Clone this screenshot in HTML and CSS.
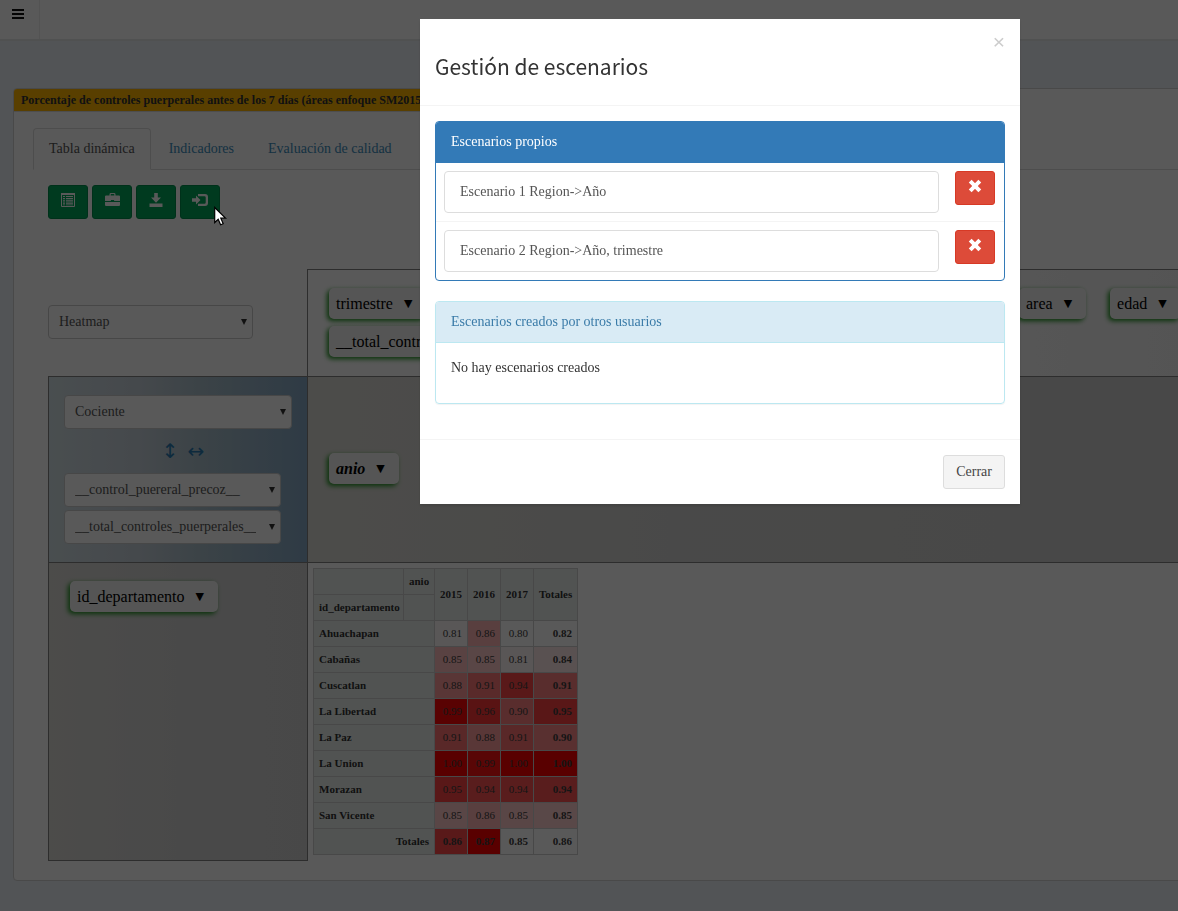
FILE: index.html
```html
<!DOCTYPE html>
<html lang="es">
<head>
<meta charset="utf-8">
<title>Tabla dinámica</title>
<link rel="stylesheet" href="styles.css">
</head>
<body>
<header class="topbar">
  <button class="menu-toggle" type="button" aria-label="Menú">
    <svg width="12" height="10" viewBox="0 0 12 10" fill="currentColor"><path d="M0 0h12v2H0zM0 4h12v2H0zM0 8h12v2H0z"/></svg>
  </button>
</header>

<main class="content">
  <section class="box">
    <h1 class="box-title">Porcentaje de controles puerperales antes de los 7 días (áreas enfoque SM2015)</h1>
    <div class="box-body">
      <nav class="tabs">
        <a class="tab tab-active" href="#tabla">Tabla dinámica</a>
        <a class="tab" href="#indicadores">Indicadores</a>
        <a class="tab" href="#calidad">Evaluación de calidad</a>
      </nav>

      <div class="pane" id="tabla">
        <div class="toolbar">
          <button class="btn btn-success" type="button" aria-label="Ver tabla">
            <svg width="14" height="14" viewBox="0 0 14 14"><path fill="none" stroke="currentColor" stroke-width="1" d="M.5.5h13v13H.5z"/><path fill="currentColor" d="M0 0h14v2H0zM2 3h2v1H2zM5 3h7v1H5zM2 5h2v1.200H2zM5 5h7v1.200H5zM2 7.300h2v1.200H2zM5 7.300h7v1.200H5zM2 9.500h2v1.200H2zM5 9.500h7v1.200H5zM2 11.500h2v.7H2zM5 11.500h7v.7H5z"/></svg>
          </button>
          <button class="btn btn-success" type="button" aria-label="Guardar escenario">
            <svg width="15" height="14" viewBox="0 0 14 14" preserveAspectRatio="none" fill="currentColor"><path d="M4.200 2.500V1.300Q4.200 0 5.500 0h3Q9.800 0 9.800 1.300v1.200H13q1 0 1 1V8H8.500V7h-3v1H0V3.500q0-1 1-1zM5.300 2.500h3.400V1.500Q8.700 1 8.200 1H5.800q-.5 0-.5.5zM0 9h14v3q0 1-1 1H1q-1 0-1-1z"/></svg>
          </button>
          <button class="btn btn-success" type="button" aria-label="Descargar">
            <svg width="14" height="14" viewBox="0 0 14 14" fill="currentColor"><path d="M5.200 0h3.600v4.500H12L7 9.800 2 4.500h3.200zM.5 10.500h13V14H.5z"/></svg>
          </button>
          <button class="btn btn-success" type="button" aria-label="Cargar escenario">
            <svg width="16" height="14" viewBox="0 0 16 14" fill="currentColor"><path d="M0 5.200h4V2.500L8.500 7 4 11.500V8.800H0zM6 1h7q3 0 3 3v6q0 3-3 3H6v-2.300h6.500q1.200 0 1.200-1.200v-5q0-1.200-1.200-1.200H6z"/></svg>
          </button>
        </div>

        <div class="pivot">
          <div class="renderer">
            <div class="select renderer-select"><select aria-label="Visualización"><option>Heatmap</option></select></div>
          </div>
          <div class="unused">
            <ul class="pills pills-column">
              <li class="pill">trimestre <span class="caret">▼</span></li>
              <li class="pill">__total_controles_puerperales__ <span class="caret">▼</span></li>
            </ul>
            <ul class="pills">
              <li class="pill">area <span class="caret">▼</span></li>
              <li class="pill">edad <span class="caret">▼</span></li>
            </ul>
          </div>
          <div class="values">
            <div class="select"><select aria-label="Agregador"><option>Cociente</option></select></div>
            <div class="orders"><a href="#filas" aria-label="Ordenar filas">↕</a><a href="#columnas" aria-label="Ordenar columnas">↔</a></div>
            <div class="measures">
              <div class="select"><select aria-label="Numerador"><option>__control_puereral_precoz__</option></select></div>
              <div class="select"><select aria-label="Denominador"><option>__total_controles_puerperales__</option></select></div>
            </div>
          </div>
          <div class="cols">
            <ul class="pills"><li class="pill pill-filtered">anio <span class="caret">▼</span></li></ul>
          </div>
          <div class="rows">
            <ul class="pills"><li class="pill">id_departamento <span class="caret">▼</span></li></ul>
          </div>
          <div class="result">
            <table class="heatmap">
              <colgroup><col class="c-name"><col class="c-axis"><col class="c-year"><col class="c-year"><col class="c-year"><col class="c-total"></colgroup>
              <thead>
                <tr><th></th><th>anio</th><th class="year" rowspan="2">2015</th><th class="year" rowspan="2">2016</th><th class="year" rowspan="2">2017</th><th class="year" rowspan="2">Totales</th></tr>
                <tr><th>id_departamento</th><th></th></tr>
              </thead>
              <tbody>
                <tr><th colspan="2">Ahuachapan</th><td style="--s:250">0.81</td><td style="--s:182">0.86</td><td style="--s:255">0.80</td><td class="total" style="--s:255">0.82</td></tr>
                <tr><th colspan="2">Cabañas</th><td style="--s:190">0.85</td><td style="--s:200">0.85</td><td style="--s:245">0.81</td><td class="total" style="--s:232">0.84</td></tr>
                <tr><th colspan="2">Cuscatlan</th><td style="--s:155">0.88</td><td style="--s:120">0.91</td><td style="--s:72">0.94</td><td class="total" style="--s:130">0.91</td></tr>
                <tr><th colspan="2">La Libertad</th><td style="--s:8">0.99</td><td style="--s:55">0.96</td><td style="--s:130">0.90</td><td class="total" style="--s:68">0.95</td></tr>
                <tr><th colspan="2">La Paz</th><td style="--s:115">0.91</td><td style="--s:158">0.88</td><td style="--s:115">0.91</td><td class="total" style="--s:138">0.90</td></tr>
                <tr><th colspan="2">La Union</th><td style="--s:0">1.00</td><td style="--s:18">0.99</td><td style="--s:0">1.00</td><td class="total" style="--s:0">1.00</td></tr>
                <tr><th colspan="2">Morazan</th><td style="--s:70">0.95</td><td style="--s:84">0.94</td><td style="--s:84">0.94</td><td class="total" style="--s:84">0.94</td></tr>
                <tr><th colspan="2">San Vicente</th><td style="--s:200">0.85</td><td style="--s:182">0.86</td><td style="--s:200">0.85</td><td class="total" style="--s:205">0.85</td></tr>
                <tr><th class="total-label" colspan="2">Totales</th><td class="total" style="--s:72">0.86</td><td class="total" style="--s:0">0.87</td><td class="total" style="--s:255">0.85</td><td class="total" style="--s:255">0.86</td></tr>
              </tbody>
            </table>
          </div>
        </div>
      </div>
    </div>
  </section>
</main>

<div class="backdrop">
  <div class="modal" role="dialog" aria-modal="true" aria-labelledby="modal-title">
    <div class="modal-header">
      <h2 class="modal-title" id="modal-title">Gestión de escenarios</h2>
      <button class="close" type="button" aria-label="Cerrar ventana">×</button>
    </div>
    <div class="modal-body">
      <section class="panel panel-primary">
        <h3 class="panel-heading">Escenarios propios</h3>
        <ul class="scenarios">
          <li class="scenario">
            <a class="scenario-name" href="#escenario-1">Escenario 1 Region-&gt;Año</a>
            <button class="btn btn-danger" type="button" aria-label="Eliminar escenario 1"><svg width="14" height="14" viewBox="0 0 14 14" fill="none" stroke="currentColor" stroke-width="4"><path d="M2.200 2.200l9.600 9.600M11.800 2.200l-9.600 9.600"/></svg></button>
          </li>
          <li class="scenario">
            <a class="scenario-name" href="#escenario-2">Escenario 2 Region-&gt;Año, trimestre</a>
            <button class="btn btn-danger" type="button" aria-label="Eliminar escenario 2"><svg width="14" height="14" viewBox="0 0 14 14" fill="none" stroke="currentColor" stroke-width="4"><path d="M2.200 2.200l9.600 9.600M11.800 2.200l-9.600 9.600"/></svg></button>
          </li>
        </ul>
      </section>
      <section class="panel panel-info">
        <h3 class="panel-heading">Escenarios creados por otros usuarios</h3>
        <div class="panel-body"><p>No hay escenarios creados</p></div>
      </section>
    </div>
    <div class="modal-footer">
      <button class="btn btn-default" type="button">Cerrar</button>
    </div>
  </div>
</div>

<svg class="cursor" width="13" height="20" viewBox="0 0 13 20"><path fill="#fff" stroke="#000" stroke-width="1.200" d="M.7 1.500v15l3.500-3.300 2.400 5.600 2.600-1.100-2.400-5.500h4.900z"/></svg>
</body>
</html>
```

FILE: styles.css
```css
* { box-sizing: border-box; }

body {
  margin: 0;
  min-height: 100vh;
  overflow: hidden;
  background: #ecf0f5;
  color: #333;
  font: 14px/20px "Liberation Serif", "Times New Roman", serif;
}

h1, h2, h3, p, ul { margin: 0; padding: 0; font-weight: normal; }
ul { list-style: none; }
a { color: #3c8dbc; text-decoration: none; }
button, select { font: inherit; }

.topbar {
  display: flex;
  height: 41px;
  background: #fff;
  border-bottom: 2px solid #e4e7e9;
}

.menu-toggle {
  width: 40px;
  padding: 0 0 10px 12px;
  border: 0;
  border-right: 1px solid #eee;
  background: none;
  color: #111;
  text-align: left;
}

.content { padding: 47px 0 30px 13px; }

.box {
  margin-right: -40px;
  border: 1px solid #d2d2d2;
  border-radius: 4px;
  background: #fff;
  overflow: hidden;
}

.box-title {
  width: fit-content;
  padding: 1px 7px;
  border-bottom: 1px solid #ddd;
  background: #ffb600;
  font-size: 12px;
  font-weight: bold;
  line-height: 20px;
}

.box-body { padding: 16px 0 19px 19px; }

.tabs { display: flex; gap: 2px; border-bottom: 1px solid #ddd; }

.tab {
  margin-bottom: -1px;
  padding: 10px 15px;
  border: 1px solid transparent;
  border-radius: 4px 4px 0 0;
}

.tab-active { border-color: #ddd #ddd #fff; background: #fff; color: #555; }

.pane { padding: 15px 0 0 15px; }

.toolbar { display: flex; gap: 4px; margin-bottom: 50px; }

.btn { border: 1px solid; border-radius: 3px; cursor: pointer; }

.btn-success,
.btn-danger {
  display: flex;
  justify-content: center;
  align-items: flex-start;
  width: 40px;
  height: 34px;
  padding: 7px 0;
  color: #fff;
}

.btn-success { border-color: #008d4c; background: #00a65a; }
.btn-danger { border-color: #d73925; background: #dd4b39; }

.btn-default {
  padding: 6px 12px;
  border-color: #ddd;
  background: #f4f4f4;
  color: #444;
}

.pivot { display: grid; grid-template-columns: 259px 1fr; }

.unused, .values, .cols, .rows, .result {
  border-top: 1px solid #808080;
  border-left: 1px solid #808080;
}

.renderer { display: flex; align-items: center; padding-bottom: 2px; }
.renderer-select { width: 205px; }

.unused {
  display: grid;
  grid-template-columns: 690px 1fr;
  padding: 18px 0 19px 21px;
  background: linear-gradient(to right, #fff, #fafafa 60%, #f0f0f0);
}

.values {
  padding: 18px 15px;
  background: linear-gradient(to right, #d2e0e4, #c6d0da 35%, #a9bfca 60%, #86a8c6);
}

.orders {
  display: flex;
  justify-content: center;
  gap: 9px;
  padding: 1px 0 0 10px;
  font-family: "DejaVu Sans", sans-serif;
  font-size: 20px;
  line-height: 43px;
}

.orders a { color: #2a7ab0; }

.measures { display: grid; gap: 3px; padding-right: 11px; }

.cols { display: flex; align-items: center; padding: 0 0 2px 21px; background: linear-gradient(to right, #dbdad4, #d2d2d0 40%, #cdcdcd); }
.rows { padding: 18px 21px; border-bottom: 1px solid #808080; background: linear-gradient(to right, #dad9d4, #d2d2d2 50%, #cfcfcf); }
.result { padding: 5px 5px 6px; }

.pills { display: flex; align-items: flex-start; gap: 24px; }
.pills-column { flex-direction: column; gap: 7px; }

.pill {
  display: flex;
  gap: 11px;
  padding: 6px 14px 5px 7px;
  border-radius: 5px;
  background: #f4f4f4;
  box-shadow: -2px 2px 5px #1d8f1d;
  color: #000;
  font-size: 16px;
  white-space: nowrap;
}

.pill-filtered { font-style: italic; font-weight: bold; }
.caret { font-family: "DejaVu Sans", sans-serif; font-size: 11px; }

.select { position: relative; }

.select select {
  display: block;
  width: 100%;
  height: 34px;
  padding: 0 24px 0 10px;
  border: 1px solid #ccc;
  border-radius: 4px;
  background: #fff;
  color: #555;
  appearance: none;
}

.select::after {
  content: "";
  position: absolute;
  top: 14px;
  right: 6px;
  border: 3px solid transparent;
  border-top: 6px solid #333;
  border-bottom: 0;
}

.heatmap {
  width: 264px;
  border-collapse: collapse;
  table-layout: fixed;
  font-size: 11px;
  line-height: 15px;
}

.c-name { width: 90px; }
.c-axis { width: 31px; }
.c-year { width: 33px; }
.c-total { width: 44px; }

.heatmap th, .heatmap td { height: 26px; padding: 5px; border: 1px solid #cdcdcd; }
.heatmap th { background: #e7eeeb; text-align: left; white-space: nowrap; }
.heatmap .year { text-align: center; }
.heatmap .total-label { text-align: right; }
.heatmap td { background: rgb(255, var(--s), var(--s)); color: #3d3d3d; text-align: right; }
.heatmap .total { font-weight: bold; }

.backdrop {
  position: fixed;
  inset: 0;
  display: flex;
  justify-content: flex-end;
  align-items: flex-start;
  padding: 19px 158px 0 20px;
  background: rgba(0, 0, 0, .65);
}

.modal {
  width: 600px;
  max-width: 100%;
  background: #fff;
  box-shadow: 0 2px 3px rgba(0, 0, 0, .13);
}

.modal-header {
  display: flex;
  justify-content: space-between;
  align-items: flex-start;
  padding: 15px;
  border-bottom: 1px solid #f4f4f4;
}

.modal-title {
  padding: 20px 0 12px;
  font-family: "Noto Sans CJK SC", "Noto Sans", sans-serif;
  font-size: 21px;
  line-height: 24px;
}

.close { padding: 0; border: 0; background: none; color: #ccc; font: 21px/16px "Liberation Sans", Arial, sans-serif; }

.modal-body { padding: 15px; }

.panel { margin-bottom: 20px; border: 1px solid; border-radius: 4px; overflow: hidden; }
.panel-heading { padding: 10px 15px; border-bottom: 1px solid; font-size: 14px; }
.panel-primary { border-color: #337ab7; }
.panel-primary .panel-heading { border-color: #337ab7; background: #337ab7; color: #fff; }
.panel-info { border-color: #bce8f1; box-shadow: 0 1px 1px rgba(0, 0, 0, .05); }
.panel-info .panel-heading { border-color: #bce8f1; background: #d9ebf5; color: #3a7ba8; }
.panel-body { padding: 15px 15px 25px; }

.scenario { display: flex; gap: 16px; padding: 8px 9px 8px 8px; }
.scenario + .scenario { border-top: 1px solid #f4f4f4; }

.scenario-name {
  flex: 1;
  padding: 10px 15px;
  border: 1px solid #ddd;
  border-radius: 4px;
  color: #555;
}

.modal-footer {
  display: flex;
  justify-content: flex-end;
  padding: 15px;
  border-top: 1px solid #f4f4f4;
}

.cursor { position: fixed; left: 214px; top: 206px; }
```
